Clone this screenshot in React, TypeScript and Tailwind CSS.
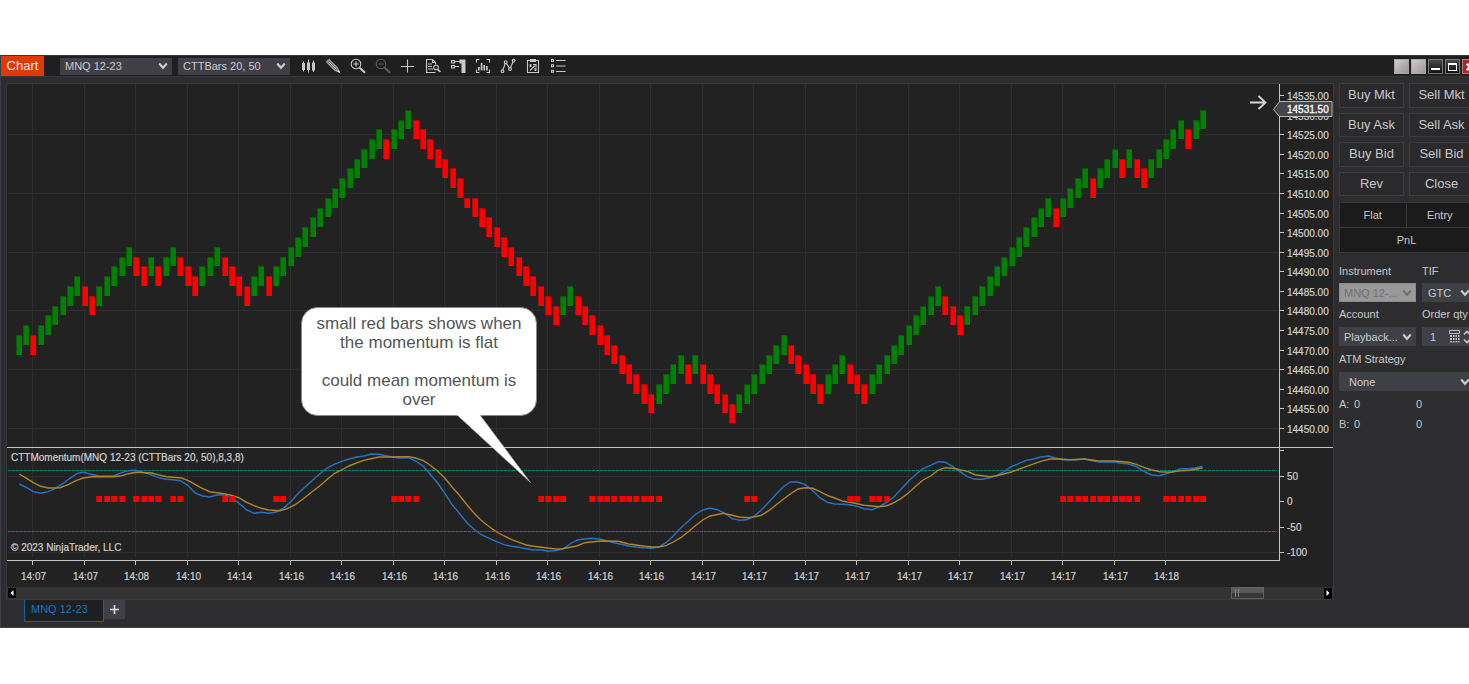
import React from "react";

const BAR_STEP = 7.356;
const FIRST_BAR = 18.55;
const LEVEL = 9.795;
const FIRST_TOP = 335;

const RUNS =
  "U2 D1 U6 D2 U5 D2 U1 D1 U2 D3 U3 D4 U2 D1 U15 D1 U3 D7 H1 D12 U2 D11 U4 D1 U1 D5 U7 D5 U3 D3 U10 D3 U12 D1 U4 D1 U3 D1 U1 D2 U5 D1 U2";

type Bar = { x: number; y: number; h: number; up: boolean };

function buildBars(): Bar[] {
  const bars: Bar[] = [];
  let level = 1;
  for (const run of RUNS.split(" ")) {
    const kind = run[0];
    for (let n = Number(run.slice(1)); n > 0; n--) {
      level += kind === "U" ? -1 : 1;
      const half = kind === "H";
      const top = Math.round(FIRST_TOP + (level + (half ? 1 : 0)) * LEVEL);
      const bottom = Math.round(FIRST_TOP + (level + 2) * LEVEL);
      bars.push({
        x: Math.round(FIRST_BAR + bars.length * BAR_STEP) - 3,
        y: top,
        h: bottom - top,
        up: kind === "U",
      });
    }
  }
  return bars;
}

const BARS = buildBars();

const FLAT_RANGES = [
  [11, 14], [16, 19], [21, 22], [28, 29], [35, 36], [51, 54], [71, 74],
  [78, 87], [99, 100], [113, 114], [116, 118], [142, 152], [156, 161],
];
const FLATS = FLAT_RANGES.flatMap(([a, b]) => Array.from({ length: b - a + 1 }, (_, i) => a + i));

const TIMES = [
  "14:07", "14:07", "14:08", "14:10", "14:14",
  ...Array<string>(8).fill("14:16"),
  ...Array<string>(9).fill("14:17"),
  "14:18",
];
const timeX = (i: number) => Math.round(32 + i * 51.5) + 0.5;

const PRICES = Array.from({ length: 18 }, (_, i) => 14535 - i * 5);
const priceY = (p: number) => Math.round(96 + ((14535 - p) / 5) * 19.59) - 0.5;

/* Each segment starts at its own x origin; samples are in thirds of a unit. */
type Segment = { origin: number; samples: string };

const FAST: Segment[] = [
  { origin: 0, samples: "58,132 80,143 100,155 122,160 145,155 165,146 188,131 210,115 232,100 250,96 272,103 297,108 342,107 365,98 385,92 408,91 430,97 452,104 475,113 497,118 519,119 541,122 563,136 585,159 607,168 629,171 650,165 672,164 694,173 716,189 740,210 762,220 784,217 806,220 828,216 850,205 872,185 894,161 916,140 938,120 960,101 980,85 1002,73 1025,64 1047,57 1070,51 1092,48 1114,42 1136,43 1158,47 1180,52" },
  { origin: 400, samples: "0,54 25,53 47,63 70,79 90,102 113,129 135,161 157,195 180,222 202,250 222,268 245,285 268,295 290,305 312,314 335,319 357,322 379,326 400,330 422,330 444,333 466,332 488,327 510,312 532,300 553,297 575,295 597,297 620,302 642,308 664,313 686,318 708,321 730,323 755,325 776,321 798,308 820,288 842,264 863,245 885,224 908,210 930,204 952,209 975,220 996,236 1018,241 1040,239 1062,229 1084,210 1106,187 1128,163 1150,140 1172,126 1194,126 1216,134 1238,152 1260,173 1282,187 1304,192 1330,193" },
  { origin: 850, samples: "0,194 22,199 42,206 66,209 88,200 110,187 132,170 154,147 176,123 198,103 219,86 242,76 264,65 286,67 308,79 330,95 352,110 375,118 397,118 419,113 440,106 462,95 484,80 506,71 528,61 550,57 572,51 596,48 616,54 638,59 682,59 704,57 726,62 748,66 793,66 815,70 837,72 859,80 881,94 903,104 925,107 947,102 969,94 992,86 1014,86 1036,84 1058,79" },
];

const SLOW: Segment[] = [
  { origin: 0, samples: "58,102 80,115 100,128 122,139 145,144 180,143 205,134 228,122 250,114 275,110 340,110 365,107 385,101 408,97 455,99 480,106 500,110 545,114 565,122 585,133 607,145 629,155 672,161 694,166 716,173 740,187 762,197 784,205 806,210 840,212 862,206 884,195 906,179 938,154 960,137 982,118 1004,100 1025,90 1047,78 1069,69 1091,61 1113,56 1136,51 1180,51" },
  { origin: 400, samples: "0,50 25,50 47,54 70,62 90,75 113,94 135,115 157,142 180,168 202,196 222,219 245,242 268,260 290,276 312,288 335,299 357,307 379,315 400,319 466,327 488,326 530,318 555,308 600,303 655,304 686,312 735,319 755,321 776,321 798,317 820,306 842,293 863,277 885,258 908,240 930,228 970,220 996,226 1018,231 1045,233 1062,231 1084,226 1106,212 1128,195 1150,178 1172,161 1194,147 1216,143 1238,145 1260,155 1282,166 1304,174 1330,184" },
  { origin: 850, samples: "0,187 22,191 42,196 88,200 110,197 132,188 154,175 176,158 198,138 219,120 242,108 264,91 286,83 308,85 352,94 375,104 419,110 440,107 484,96 528,80 572,64 600,57 620,56 660,59 704,57 740,62 793,63 837,67 859,73 881,82 903,89 930,95 960,97 992,92 1020,91 1058,84" },
];

const trace = (segments: Segment[]) =>
  segments
    .flatMap((s) =>
      s.samples.split(" ").map((pair) => {
        const [x, y] = pair.split(",").map(Number);
        return `${(s.origin + x / 3).toFixed(1)},${(440 + y / 3).toFixed(1)}`;
      }),
    )
    .join(" ");

function PriceChart() {
  return (
    <svg viewBox="7 84 1326 503" className="block h-auto w-full" role="img" aria-label="MNQ 12-23 price and momentum">
      <g stroke="#2e2e2e" strokeWidth="1" shapeRendering="crispEdges">
        {TIMES.map((_, i) => (
          <line key={i} x1={timeX(i)} x2={timeX(i)} y1="84" y2="557" />
        ))}
        {[14525, 14510, 14495, 14480, 14465, 14450].map((p) => (
          <line key={p} x1="8" x2="1278" y1={priceY(p)} y2={priceY(p)} />
        ))}
        <line x1="8" x2="1278" y1="476.5" y2="476.5" />
        <line x1="8" x2="1278" y1="552.5" y2="552.5" />
      </g>

      <g shapeRendering="crispEdges">
        {BARS.map((b, i) => (
          <g key={i}>
            <rect x={b.x} y={b.y} width="6" height={b.h} fill={b.up ? "#0b5a0b" : "#a80c0c"} />
            <rect x={b.x + 1} y={b.y + 1} width="5" height={b.h - 1} fill={b.up ? "#028002" : "#fe0000"} />
          </g>
        ))}
      </g>

      <g stroke="#0f7f78" strokeWidth="1" strokeDasharray="3 1" shapeRendering="crispEdges">
        <line x1="8" x2="1277" y1="470.5" y2="470.5" />
        <line x1="8" x2="1277" y1="531.5" y2="531.5" />
      </g>
      <polyline points={trace(FAST)} fill="none" stroke="#2474c4" strokeWidth="1.4" />
      <polyline points={trace(SLOW)} fill="none" stroke="#b0842a" strokeWidth="1.4" />
      <g shapeRendering="crispEdges">
        {FLATS.map((i) => (
          <g key={i}>
            <rect x={Math.round(FIRST_BAR + i * BAR_STEP) - 3} y="496" width="6" height="6" fill="#c00a0a" />
            <rect x={Math.round(FIRST_BAR + i * BAR_STEP) - 2} y="496" width="5" height="6" fill="#fe0000" />
          </g>
        ))}
      </g>

      <g stroke="#c4c4c4" strokeWidth="1" shapeRendering="crispEdges">
        <line x1="1279.5" x2="1279.5" y1="84" y2="561" />
        <line x1="7" x2="1333" y1="447.5" y2="447.5" />
        <line x1="7" x2="1280" y1="560.5" y2="560.5" />
        {PRICES.map((p) => (
          <line key={p} x1="1280" x2="1284" y1={priceY(p)} y2={priceY(p)} />
        ))}
        {[450.5, 476.5, 501.5, 527.5, 552.5].map((y) => (
          <line key={y} x1="1280" x2="1284" y1={y} y2={y} />
        ))}
        {TIMES.map((_, i) => (
          <line key={i} x1={timeX(i)} x2={timeX(i)} y1="561" y2="565" />
        ))}
      </g>

      <g fill="#d0d0d0" stroke="#d0d0d0" strokeWidth="0.2" fontSize="10">
        {PRICES.map((p) => (
          <text key={p} x="1287" y={priceY(p) + 4}>{p.toFixed(2)}</text>
        ))}
        <text x="1287" y="480">50</text>
        <text x="1287" y="505">0</text>
        <text x="1287" y="531">-50</text>
        <text x="1287" y="556">-100</text>
        {TIMES.map((t, i) => (
          <text key={i} x={timeX(i) + 1} y="580" textAnchor="middle">{t}</text>
        ))}
        <text x="11" y="461">CTTMomentum(MNQ 12-23 (CTTBars 20, 50),8,3,8)</text>
        <text x="11" y="551">© 2023 NinjaTrader, LLC</text>
      </g>

      <path d="M1273.5 109.5 L1279.5 101.5 H1332 V116.5 H1279.5 Z" fill="#45454c" stroke="#b8b8b8" strokeWidth="1" />
      <text x="1287" y="113" fontSize="10" fill="#ffffff" stroke="#ffffff" strokeWidth="0.3">14531.50</text>
      <path d="M1250 102.5 H1265 M1258.5 96 L1265.5 102.5 L1258.5 109" fill="none" stroke="#d6d6d6" strokeWidth="1.8" />
    </svg>
  );
}

function Chevron({ className = "" }: { className?: string }) {
  return (
    <svg viewBox="0 0 10 8" className={`pointer-events-none absolute top-1/2 h-2 w-[10px] -translate-y-1/2 ${className}`} aria-hidden="true">
      <path d="M1.2 1.5 L5 5.8 L8.8 1.5" fill="none" stroke="currentColor" strokeWidth="2.1" />
    </svg>
  );
}

type PickProps = {
  id: string;
  label: string;
  value: string;
  className: string;
  selectClass?: string;
  chevronClass?: string;
  disabled?: boolean;
};

function Pick({ id, label, value, className, selectClass = "pl-[5px]", chevronClass = "right-1", disabled }: PickProps) {
  return (
    <div className={`relative ${disabled ? "bg-[#999999] text-[#707070]" : "bg-[#3f3f46] text-[#cccccc]"} ${className}`}>
      <select
        id={id}
        aria-label={label}
        disabled={disabled}
        className={`block h-full w-full appearance-none bg-transparent text-[11px] leading-4 opacity-100 outline-none ${selectClass}`}
      >
        <option>{value}</option>
      </select>
      <Chevron className={chevronClass} />
    </div>
  );
}

const TOOLS: { name: string; dim?: boolean; art: React.ReactNode }[] = [
  {
    name: "Chart style",
    art: (
      <g fill="currentColor" stroke="none">
        <path d="M2 5h3v7h-3zM3 3.5h1v10h-1zM7 4.5h3v7.5h-3zM8 1.5h1v13h-1zM12 4.5h3v8h-3zM13 2.5h1v11.5h-1z" />
      </g>
    ),
  },
  {
    name: "Drawing tools",
    art: (
      <g>
        <path d="M1.5 3.8 L4 1.4 L12.6 10 L14 13.8 L10 12.5 Z" fill="#6a6a6a" stroke="#a8a8a8" />
        <path d="M3.5 3.5 L11.5 11.5" stroke="#dddddd" strokeWidth=".8" />
        <path d="M12 13.4 L13.8 11.6 L15.5 15.5z" fill="#dddddd" stroke="none" />
      </g>
    ),
  },
  {
    name: "Zoom in",
    art: (
      <g>
        <circle cx="6" cy="6" r="4.8" />
        <path d="M6 3.3v5.4M3.3 6h5.4" />
        <path d="M9.7 9.7 L15 14.8" strokeWidth="2" />
      </g>
    ),
  },
  {
    name: "Zoom out",
    dim: true,
    art: (
      <g>
        <circle cx="6" cy="6" r="4.8" />
        <path d="M3.3 6h5.4" />
        <path d="M9.7 9.7 L15 14.8" strokeWidth="2" />
      </g>
    ),
  },
  { name: "Crosshair", art: <path d="M7.5 1.5v13M1 8.5h13" /> },
  {
    name: "Data box",
    art: (
      <g>
        <path d="M10.5 14.5h-9v-13h6l3 3v2M7.5 1.5v3h3M3 6h4M3 8.5h4M3 11h5" />
        <circle cx="11" cy="9.5" r="2.3" />
        <path d="M12.6 11.3 L15.4 14" strokeWidth="1.7" />
      </g>
    ),
  },
  {
    name: "Chart trader",
    art: (
      <g>
        <path d="M1.5 2.5h3v2.5h-3zM1.5 7.5h3v2.5h-3zM5 3.5h5M5 8.5h4" />
        <path d="M9.5 1.5h6v13.5h-4v-9.5h-2z" fill="currentColor" stroke="none" />
      </g>
    ),
  },
  {
    name: "Data series",
    art: (
      <g>
        <path d="M4.5 1.5h-3v3M11.5 1.5h3v3M4.5 14.5h-3v-3M11.5 14.5h3v-3" />
        <path d="M3 9h1.7v3.5H3zM5.7 5h1.7v7.5H5.7zM8.4 7h1.7v5.5H8.4zM11 8h1.7v4.5H11z" fill="currentColor" stroke="none" />
      </g>
    ),
  },
  {
    name: "Indicators",
    art: (
      <g>
        <path d="M2.8 12.2 L5.2 5.5 M6.3 5.4 L9.4 10 M10.5 9.8 L13 3.8" />
        <circle cx="2.5" cy="13.3" r="1.4" />
        <circle cx="5.7" cy="4.2" r="1.4" />
        <circle cx="10" cy="11" r="1.4" />
        <circle cx="13.6" cy="2.6" r="1.4" />
      </g>
    ),
  },
  {
    name: "Strategies",
    art: (
      <g>
        <path d="M2.5 2.5h11v12h-11z" />
        <path d="M5 1h6v3H5z" fill="currentColor" stroke="none" />
        <path d="M4.5 6.5l2 2M6.5 6.5l-2 2M9.5 10.5l2 2M11.5 10.5l-2 2M5 12.5l5-5M8 6.5h3v3" />
      </g>
    ),
  },
  {
    name: "Properties",
    art: (
      <g>
        <path d="M1.5 1.5h2v2h-2zM1.5 6.8h2v2h-2zM1.5 12.2h2v2h-2z" />
        <path d="M6 2.5h9.5M6 8h9.5M6 13.5h9.5" />
      </g>
    ),
  },
];

function TitleBar() {
  return (
    <header className="flex h-[22px] items-start justify-between overflow-hidden border-t border-b border-[#38383b] bg-[#1f1f1f]">
      <div className="flex shrink-0 items-center">
        <h1 className="h-5 w-[43px] bg-[#dd3a04] text-center text-[13px] leading-5 text-[#f2e6e0]">Chart</h1>
        <Pick id="series" label="Instrument series" value="MNQ 12-23" className="ml-4 h-[17px] w-[112px]" />
        <Pick id="interval" label="Bar interval" value="CTTBars 20, 50" className="ml-[6px] h-[17px] w-[112px]" />
        <nav aria-label="Chart tools" className="ml-[10px] flex gap-[9px]">
          {TOOLS.map((t) => (
            <button key={t.name} type="button" aria-label={t.name} className={t.dim ? "text-[#5c5c5c]" : "text-[#c8c8c8]"}>
              <svg viewBox="0 0 16 16" className="block size-4" fill="none" stroke="currentColor" strokeWidth="1.1">
                {t.art}
              </svg>
            </button>
          ))}
        </nav>
      </div>
      <div className="-mr-2 mt-[3px] flex shrink-0 gap-[2px]">
        <button type="button" aria-label="Link instrument" className="size-[15px] border border-[#a9a5a5] bg-linear-to-br from-[#cfcccc] to-[#9a9696]" />
        <button type="button" aria-label="Link interval" className="size-[15px] border border-[#a9a5a5] bg-linear-to-br from-[#cfcccc] to-[#9a9696]" />
        <button type="button" aria-label="Minimize" className="flex size-[15px] items-end justify-center border border-[#77777a] bg-linear-to-b from-[#4a4a4d] to-[#101010] pb-[3px]">
          <span className="h-[2px] w-[9px] bg-white" />
        </button>
        <button type="button" aria-label="Maximize" className="flex size-[15px] items-center justify-center border border-[#77777a] bg-linear-to-b from-[#4a4a4d] to-[#101010]">
          <span className="h-2 w-[9px] border border-t-2 border-white" />
        </button>
        <button type="button" aria-label="Close window" className="flex size-[15px] items-center justify-center border border-[#a88080] bg-[#b8202a] text-white">
          <svg viewBox="0 0 10 10" className="size-2" stroke="currentColor" strokeWidth="3">
            <path d="M1 1l8 8M9 1l-8 8" />
          </svg>
        </button>
      </div>
    </header>
  );
}

function Callout() {
  return (
    <div className="absolute left-[294px] top-[223px] h-[108px] w-[236px]">
      <svg viewBox="0 0 236 180" className="pointer-events-none absolute left-0 top-0 h-[180px] w-[236px] overflow-visible" aria-hidden="true">
        <rect x="0.5" y="0.5" width="235" height="108" rx="16" fill="#fff" stroke="#8a8a8a" />
        <path d="M156 108 L229.5 175.5 L179 108 Z" fill="#fff" stroke="#9a9a9a" strokeWidth=".6" />
        <path d="M154 104 H181 L179 109 H157 Z" fill="#fff" />
      </svg>
      <p className="relative px-2 pt-[7px] text-center text-[17px] leading-[19px] text-[#555555]">
        small red bars shows when the momentum is flat
        <br />
        <br />
        could mean momentum is over
      </p>
    </div>
  );
}

function ScrollTrack() {
  return (
    <div className="flex h-3 items-center justify-between bg-[#333333]">
      <button type="button" aria-label="Scroll left" className="ml-px flex h-[10px] w-2 items-center justify-center bg-black">
        <svg viewBox="0 0 4 6" className="h-[6px] w-1"><path d="M3.5 0v6L.5 3z" fill="#fff" /></svg>
      </button>
      <div className="flex h-3 grow justify-end pr-[60px]">
        <div className="flex h-3 w-[33px] items-center gap-px border border-[#606060] bg-linear-to-b from-[#5a5a5a] from-50% to-[#363636] to-50% pl-[3px]">
          <span className="h-2 w-px bg-[#858585]" />
          <span className="ml-px h-2 w-px bg-[#858585]" />
        </div>
      </div>
      <button type="button" aria-label="Scroll right" className="mr-px flex h-[11px] w-2 items-center justify-center bg-black">
        <svg viewBox="0 0 4 6" className="h-[6px] w-1"><path d="M.5 0v6l3-3z" fill="#fff" /></svg>
      </button>
    </div>
  );
}

const ORDER_BUTTONS = ["Buy Mkt", "Sell Mkt", "Buy Ask", "Sell Ask", "Buy Bid", "Sell Bid", "Rev", "Close"];

function OrderPanel() {
  return (
    <aside className="w-[135px] shrink-0 overflow-hidden pl-[5px] text-[11px] leading-4 text-[#c8c8c8]">
      <div className="w-[135px]">
        <div className="grid h-[113px] grid-cols-2 grid-rows-4 gap-[5px]">
          {ORDER_BUTTONS.map((b) => (
            <button key={b} type="button" className="border border-[#3b3b3f] bg-[#2a2a2c] text-[13px] leading-4">{b}</button>
          ))}
        </div>

        <div className="mt-[6px] grid grid-cols-2 border border-[#38383b] bg-[#1b1b1b] text-center">
          <div className="border-r border-[#38383b] py-1">Flat</div>
          <div className="py-1">Entry</div>
          <div className="col-span-2 border-t border-[#38383b] py-1">PnL</div>
        </div>

        <div className="mt-[10px] grid grid-cols-[77px_1fr] gap-x-[6px]">
          <label htmlFor="instrument">Instrument</label>
          <label htmlFor="tif">TIF</label>
          <Pick id="instrument" label="Instrument" value="MNQ 12-..." disabled className="mt-1 h-[19px] border border-[#8c8c8c]" selectClass="pl-1" chevronClass="right-[3px]" />
          <Pick id="tif" label="TIF" value="GTC" className="mt-1 h-[19px]" selectClass="pl-[6px]" />
          <label htmlFor="account" className="mt-1">Account</label>
          <label htmlFor="qty" className="mt-1">Order qty</label>
          <Pick id="account" label="Account" value="Playback..." className="mt-[5px] h-[19px]" />
          <div className="mt-[5px] flex h-[19px] items-center bg-[#3f3f46]">
            <input id="qty" defaultValue="1" className="w-[27px] bg-transparent pl-[8px] text-[11px] leading-4 outline-none" />
            <svg viewBox="0 0 11 13" className="h-[13px] w-[11px]" aria-hidden="true">
              <path d="M.5.5h10v3h-10z" fill="none" stroke="#bdbdbd" />
              <path d="M1 5h2v2H1zM4 5h1.5v2H4zM6.5 5H8v2H6.5zM9 5h1.5v2H9zM1 8h2v2H1zM4 8h1.5v2H4zM6.5 8H8v2H6.5zM9 8h1.5v2H9zM1 11h2v1.5H1zM4 11h1.5v1.5H4zM6.5 11H8v1.5H6.5zM9 11h1.5v1.5H9z" fill="#bdbdbd" />
            </svg>
            <svg viewBox="0 0 8 14" className="ml-[3px] h-[14px] w-2" fill="none" stroke="#cccccc" strokeWidth="1.7" aria-hidden="true">
              <path d="M1 4.5L4 1.5l3 3M1 9.5l3 3 3-3" />
            </svg>
          </div>
        </div>

        <label htmlFor="atm" className="mt-[5px] block">ATM Strategy</label>
        <Pick id="atm" label="ATM Strategy" value="None" className="mt-[5px] h-[19px]" selectClass="pl-[10px]" />
        <dl className="mt-[5px] grid grid-cols-[15px_62px_1fr] gap-y-1">
          <dt>A:</dt>
          <dd>0</dd>
          <dd>0</dd>
          <dt>B:</dt>
          <dd>0</dd>
          <dd>0</dd>
        </dl>
      </div>
    </aside>
  );
}

export default function App() {
  return (
    <div className="min-h-screen bg-white pt-[55px] font-['Liberation_Sans',Arial,sans-serif]">
      <main className="overflow-hidden border-b border-l border-[#3f3f46] bg-[#2d2d30]">
        <TitleBar />
        <div className="flex pl-[5px] pt-[6px]">
          <section className="min-w-0 grow">
            <div className="relative border border-[#3a3a3d] bg-[#222222]">
              <PriceChart />
              <Callout />
              <ScrollTrack />
            </div>
            <div className="flex h-[27px] items-start pl-[18px]">
              <button type="button" className="flex h-[22px] w-20 items-start border border-t-0 border-[#0d63a3] bg-[#1f1f1f] pl-[6px] pt-px text-[11px] leading-4 font-medium text-[#1277bd]">
                MNQ 12-23
              </button>
              <button type="button" aria-label="Add tab" className="flex h-[19px] w-[21px] items-center justify-center bg-[#3f3f46]">
                <svg viewBox="0 0 9 9" className="size-[9px]" stroke="#dddddd" strokeWidth="1.6">
                  <path d="M4.5 0v9M0 4.5h9" />
                </svg>
              </button>
            </div>
          </section>
          <OrderPanel />
        </div>
      </main>
    </div>
  );
}
